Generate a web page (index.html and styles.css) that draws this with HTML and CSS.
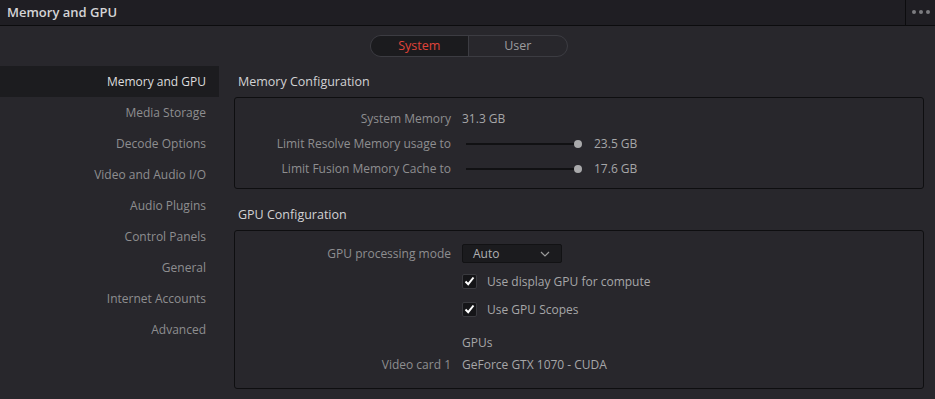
FILE: index.html
```html
<!DOCTYPE html>
<html lang="en">
<head>
    <meta charset="UTF-8">
    <title>Memory and GPU</title>
    <link rel="stylesheet" href="styles.css">
</head>
<body>
    <div class="window">
        <div class="titlebar">
            <div class="title">Memory and GPU</div>
            <div class="menu"><span></span><span></span><span></span></div>
        </div>

        <div class="tabs">
            <div class="toggle">
                <div class="toggle-item active">System</div>
                <div class="toggle-item">User</div>
            </div>
        </div>

        <div class="columns">
            <div class="sidebar">
                <div class="nav-item selected">Memory and GPU</div>
                <div class="nav-item">Media Storage</div>
                <div class="nav-item">Decode Options</div>
                <div class="nav-item">Video and Audio I/O</div>
                <div class="nav-item">Audio Plugins</div>
                <div class="nav-item">Control Panels</div>
                <div class="nav-item">General</div>
                <div class="nav-item">Internet Accounts</div>
                <div class="nav-item">Advanced</div>
            </div>

            <div class="content">
                <div class="section">
                    <div class="section-title">Memory Configuration</div>
                    <div class="box memory-box">
                        <div class="row">
                            <div class="label">System Memory</div>
                            <div class="value">31.3 GB</div>
                        </div>
                        <div class="row">
                            <div class="label">Limit Resolve Memory usage to</div>
                            <div class="value">
                                <div class="slider"><div class="track"></div><div class="knob"></div></div>
                                <span class="slider-value">23.5 GB</span>
                            </div>
                        </div>
                        <div class="row">
                            <div class="label">Limit Fusion Memory Cache to</div>
                            <div class="value">
                                <div class="slider"><div class="track"></div><div class="knob"></div></div>
                                <span class="slider-value">17.6 GB</span>
                            </div>
                        </div>
                    </div>
                </div>

                <div class="section gpu-section">
                    <div class="section-title">GPU Configuration</div>
                    <div class="box gpu-box">
                        <div class="row mode-row">
                            <div class="label">GPU processing mode</div>
                            <div class="value">
                                <div class="dropdown">
                                    <span>Auto</span>
                                    <svg width="10" height="6" viewBox="0 0 10 6"><path d="M1 1 L5 5 L9 1" fill="none" stroke="#9a9a9a" stroke-width="1.2"/></svg>
                                </div>
                            </div>
                        </div>
                        <div class="row check-row">
                            <div class="label"></div>
                            <div class="value">
                                <div class="checkbox"><svg width="11" height="10" viewBox="0 0 11 10"><path d="M1.5 5.5 L4.2 8.2 L9.5 1.5" fill="none" stroke="#ffffff" stroke-width="2"/></svg></div>
                                <span class="check-label">Use display GPU for compute</span>
                            </div>
                        </div>
                        <div class="row check-row">
                            <div class="label"></div>
                            <div class="value">
                                <div class="checkbox"><svg width="11" height="10" viewBox="0 0 11 10"><path d="M1.5 5.5 L4.2 8.2 L9.5 1.5" fill="none" stroke="#ffffff" stroke-width="2"/></svg></div>
                                <span class="check-label">Use GPU Scopes</span>
                            </div>
                        </div>
                        <div class="row gpus-row">
                            <div class="label"></div>
                            <div class="value">GPUs</div>
                        </div>
                        <div class="row card-row">
                            <div class="label">Video card 1</div>
                            <div class="value">GeForce GTX 1070 - CUDA</div>
                        </div>
                    </div>
                </div>
            </div>
        </div>
    </div>
</body>
</html>
```

FILE: styles.css
```css
* {
    margin: 0;
    padding: 0;
    box-sizing: border-box;
}

body {
    font-family: 'Open Sans', 'Noto Sans', sans-serif;
    background: #28272c;
    width: 935px;
    height: 399px;
    overflow: hidden;
    font-size: 12px;
    color: #8e8e90;
}

.window {
    height: 399px;
    display: flex;
    flex-direction: column;
}

.titlebar {
    height: 26px;
    background: #1f1e23;
    border-bottom: 1px solid #0c0c0e;
    display: flex;
    align-items: stretch;
}

.title {
    flex: 1;
    padding-left: 7px;
    line-height: 24px;
    font-size: 13px;
    font-weight: 600;
    color: #d4d4d6;
}

.menu {
    width: 30px;
    border-left: 1px solid #0c0c0e;
    display: flex;
    align-items: center;
    justify-content: center;
    gap: 3px;
    padding-bottom: 2px;
}

.menu span {
    width: 4px;
    height: 4px;
    border-radius: 50%;
    background: #7c7c80;
}

.tabs {
    display: flex;
    justify-content: center;
    padding-top: 9px;
    padding-left: 2px;
}

.toggle {
    display: flex;
    width: 198px;
    height: 22px;
    border: 1px solid #3c3c42;
    border-radius: 11px;
    overflow: hidden;
}

.toggle-item {
    flex: 1;
    text-align: center;
    line-height: 20px;
    font-size: 12.5px;
    color: #9c9c9f;
}

.toggle-item.active {
    background: #1b1b1e;
    color: #e0443a;
    border-right: 1px solid #3c3c42;
}

.columns {
    display: flex;
    margin-top: 9px;
    flex: 1;
}

.sidebar {
    width: 219px;
}

.nav-item {
    height: 31px;
    line-height: 31px;
    text-align: right;
    padding-right: 13px;
    font-size: 12px;
    color: #8e8e90;
}

.nav-item.selected {
    background: #1c1c1f;
    color: #dcdcde;
}

.content {
    flex: 1;
    margin-left: 15px;
    margin-right: 11px;
}

.section-title {
    height: 31px;
    line-height: 31px;
    padding-left: 4px;
    font-size: 12.5px;
    color: #d2d2d4;
}

.gpu-section {
    margin-top: 10px;
}

.box {
    border: 1px solid #0e0e10;
    border-radius: 3px;
}

.memory-box {
    padding: 8px 0 7px;
}

.gpu-box {
    padding: 9px 0 14px;
}

.row {
    display: grid;
    grid-template-columns: 216px 1fr;
    column-gap: 11px;
    height: 25px;
    align-items: center;
}

.mode-row {
    height: 27px;
}

.check-row {
    height: 28px;
}

.gpus-row {
    height: 24px;
    margin-top: 7px;
}

.card-row {
    height: 20px;
}

.label {
    text-align: right;
    color: #8e8e90;
}

.value {
    display: flex;
    align-items: center;
    color: #a6a6a8;
}

.slider {
    position: relative;
    width: 120px;
    height: 10px;
}

.track {
    position: absolute;
    left: 4px;
    right: 4px;
    top: 4px;
    height: 2px;
    background: #111113;
}

.knob {
    position: absolute;
    right: 0;
    top: 1px;
    width: 8px;
    height: 8px;
    border-radius: 50%;
    background: #a9a9ab;
}

.slider-value {
    margin-left: 12px;
}

.dropdown {
    width: 100px;
    height: 19px;
    background: #1b1b1e;
    border: 1px solid #121214;
    border-radius: 2px;
    display: flex;
    align-items: center;
    justify-content: space-between;
    padding: 0 11px 0 10px;
    color: #b0b0b2;
}

.checkbox {
    width: 15px;
    height: 15px;
    background: #151518;
    border: 1px solid #3a3a3f;
    border-radius: 2px;
    display: flex;
    align-items: center;
    justify-content: center;
}

.check-label {
    margin-left: 10px;
}
```
